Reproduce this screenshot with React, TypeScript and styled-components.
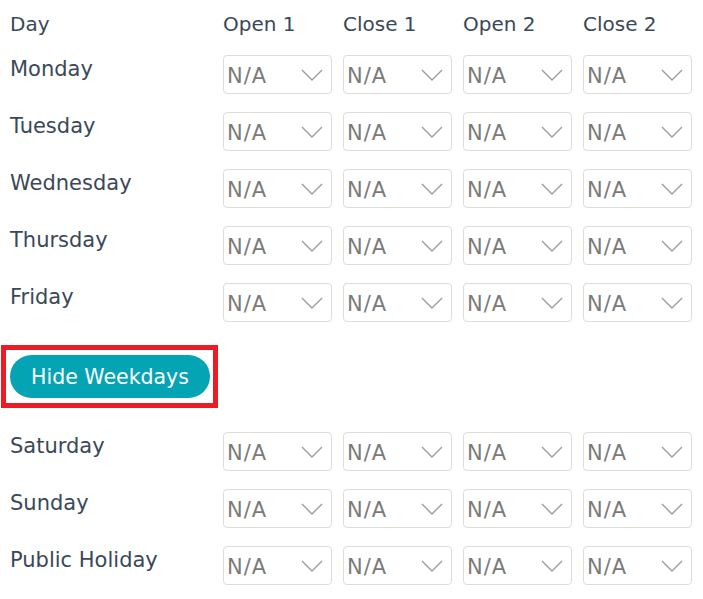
import { FC, Fragment } from 'react'
import styled, { createGlobalStyle } from 'styled-components'

const GlobalStyle = createGlobalStyle`
  body {
    margin: 0;
    background: #ffffff;
    font-family: 'DejaVu Sans', 'Liberation Sans', sans-serif;
  }
`

const columns = ['Open 1', 'Close 1', 'Open 2', 'Close 2']
const weekdays = ['Monday', 'Tuesday', 'Wednesday', 'Thursday', 'Friday']
const weekend = ['Saturday', 'Sunday', 'Public Holiday']

const Page = styled.div`
  padding: 13px 0 0 10px;
  color: #3a4858;
`

const Grid = styled.div<{ $header?: boolean }>`
  display: grid;
  grid-template-columns: 202px repeat(4, 109px);
  column-gap: 11px;
  row-gap: 18px;
  margin-bottom: ${(p) => (p.$header ? '19px' : '0')};
`

const HeaderCell = styled.div`
  font-size: 20px;
  line-height: 23px;
`

const DayLabel = styled.div`
  font-size: 21px;
  line-height: 24px;
  padding-top: 2px;
`

const SelectBox = styled.div`
  box-sizing: border-box;
  height: 39px;
  border: 1px solid #dcdcdc;
  border-radius: 4px;
  display: flex;
  align-items: center;
  justify-content: space-between;
  padding: 0 8px 0 3px;
  background: #ffffff;
`

const SelectValue = styled.span`
  font-size: 21px;
  color: #7a7a7a;
  letter-spacing: 1px;
  padding-top: 2px;
`

const Chevron = styled.svg`
  width: 22px;
  height: 12px;
  flex-shrink: 0;
`

const ToggleArea = styled.div`
  margin: 23px 0 24px -9px;
  width: fit-content;
  border: 5px solid #ec1c24;
  padding: 5px 3px 5px 4px;
`

const ToggleButton = styled.button`
  display: block;
  width: 200px;
  height: 43px;
  border: none;
  border-radius: 22px;
  background: #05a4b4;
  color: #ffffff;
  font-family: 'DejaVu Sans', 'Liberation Sans', sans-serif;
  font-size: 20.5px;
  padding: 0;
  cursor: pointer;
`

const TimeSelect: FC = () => (
  <SelectBox>
    <SelectValue>N/A</SelectValue>
    <Chevron viewBox="0 0 22 12">
      <path d="M1 1 L11 11 L21 1" fill="none" stroke="#9c9c9c" strokeWidth="1.4" />
    </Chevron>
  </SelectBox>
)

const DayRows: FC<{ days: string[] }> = ({ days }) => (
  <Grid>
    {days.map((day) => (
      <Fragment key={day}>
        <DayLabel>{day}</DayLabel>
        {columns.map((c) => (
          <TimeSelect key={c} />
        ))}
      </Fragment>
    ))}
  </Grid>
)

export default function App() {
  return (
    <>
      <GlobalStyle />
      <Page>
        <Grid $header>
          <HeaderCell>Day</HeaderCell>
          {columns.map((c) => (
            <HeaderCell key={c}>{c}</HeaderCell>
          ))}
        </Grid>
        <DayRows days={weekdays} />
        <ToggleArea>
          <ToggleButton>Hide Weekdays</ToggleButton>
        </ToggleArea>
        <DayRows days={weekend} />
      </Page>
    </>
  )
}
